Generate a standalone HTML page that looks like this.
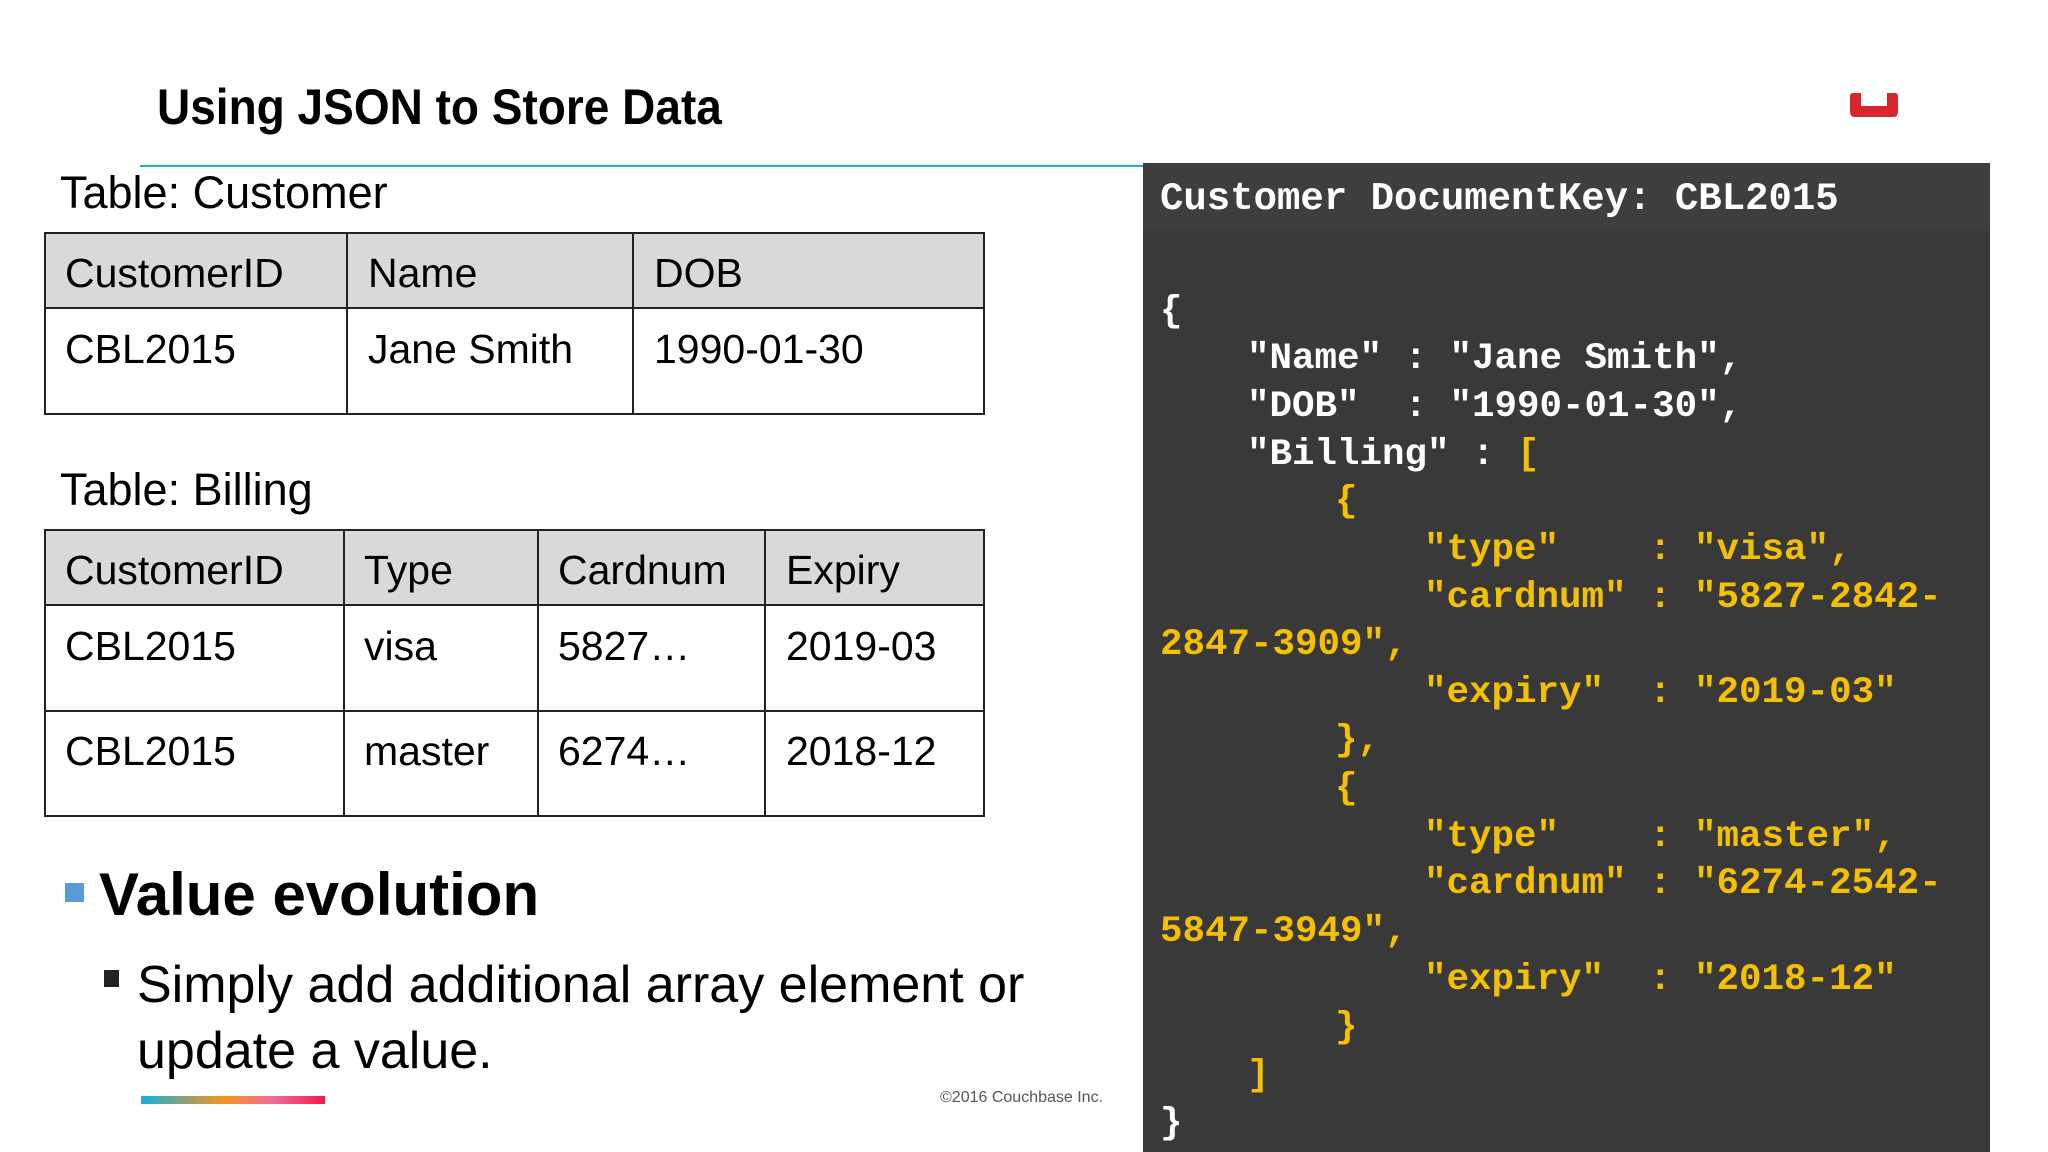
<!DOCTYPE html>
<html><head><meta charset="utf-8"><style>
body{margin:0;width:2048px;height:1152px;background:#fff;position:relative;overflow:hidden;font-family:"Liberation Sans",sans-serif;color:#000}
.a{position:absolute;white-space:pre;line-height:1}
.c{font-size:41px}
.t{font-size:45px}
.m{font-family:"Liberation Mono",monospace;font-weight:bold;font-size:37.5px;color:#fff}
.y{color:#f5c000}
.hl{position:absolute;background:#222}
</style></head><body>
<div class="a" style="left:157px;top:82px;font-size:50px;font-weight:bold;transform:scaleX(0.92);transform-origin:left top">Using JSON to Store Data</div>
<svg style="position:absolute;left:1850px;top:93px" width="48" height="25" viewBox="0 0 48 25"><path d="M0 3 Q0 0 3 0 H11 V13 H37 V0 H45 Q48 0 48 3 V19 Q48 24 43 24 H5 Q0 24 0 19 Z" fill="#d8262f"/></svg>
<div style="position:absolute;left:140px;top:165px;width:1005px;height:2px;background:#29a9d6"></div>

<div class="a t" style="left:60px;top:170px">Table: Customer</div>
<div style="position:absolute;left:44px;top:232px;width:939px;height:76px;background:#d9d9d9"></div>
<div class="hl" style="left:44px;top:232px;width:941px;height:2px"></div>
<div class="hl" style="left:44px;top:307px;width:941px;height:2px"></div>
<div class="hl" style="left:44px;top:413px;width:941px;height:2px"></div>
<div class="hl" style="left:44px;top:232px;width:2px;height:183px"></div>
<div class="hl" style="left:346px;top:232px;width:2px;height:183px"></div>
<div class="hl" style="left:632px;top:232px;width:2px;height:183px"></div>
<div class="hl" style="left:983px;top:232px;width:2px;height:183px"></div>
<div class="a c" style="left:65px;top:253px">CustomerID</div>
<div class="a c" style="left:368px;top:253px">Name</div>
<div class="a c" style="left:654px;top:253px">DOB</div>
<div class="a c" style="left:65px;top:329px">CBL2015</div>
<div class="a c" style="left:368px;top:329px">Jane Smith</div>
<div class="a c" style="left:654px;top:329px">1990-01-30</div>

<div class="a t" style="left:60px;top:467px">Table: Billing</div>
<div style="position:absolute;left:44px;top:529px;width:939px;height:76px;background:#d9d9d9"></div>
<div class="hl" style="left:44px;top:529px;width:941px;height:2px"></div>
<div class="hl" style="left:44px;top:604px;width:941px;height:2px"></div>
<div class="hl" style="left:44px;top:710px;width:941px;height:2px"></div>
<div class="hl" style="left:44px;top:815px;width:941px;height:2px"></div>
<div class="hl" style="left:44px;top:529px;width:2px;height:288px"></div>
<div class="hl" style="left:343px;top:529px;width:2px;height:288px"></div>
<div class="hl" style="left:537px;top:529px;width:2px;height:288px"></div>
<div class="hl" style="left:764px;top:529px;width:2px;height:288px"></div>
<div class="hl" style="left:983px;top:529px;width:2px;height:288px"></div>
<div class="a c" style="left:65px;top:550px">CustomerID</div>
<div class="a c" style="left:364px;top:550px">Type</div>
<div class="a c" style="left:558px;top:550px">Cardnum</div>
<div class="a c" style="left:786px;top:550px">Expiry</div>
<div class="a c" style="left:65px;top:626px">CBL2015</div>
<div class="a c" style="left:364px;top:626px">visa</div>
<div class="a c" style="left:558px;top:626px">5827…</div>
<div class="a c" style="left:786px;top:626px">2019-03</div>
<div class="a c" style="left:65px;top:731px">CBL2015</div>
<div class="a c" style="left:364px;top:731px">master</div>
<div class="a c" style="left:558px;top:731px">6274…</div>
<div class="a c" style="left:786px;top:731px">2018-12</div>

<div style="position:absolute;left:65px;top:883px;width:19px;height:19px;background:#5b9bd5"></div>
<div class="a" style="left:99px;top:865px;font-size:60px;font-weight:bold">Value evolution</div>
<div style="position:absolute;left:104px;top:970px;width:15px;height:17px;background:#222"></div>
<div class="a" style="left:137px;top:959px;font-size:52px">Simply add additional array element or</div>
<div class="a" style="left:137px;top:1025px;font-size:52px">update a value.</div>
<div style="position:absolute;left:141px;top:1096px;width:184px;height:8px;background:linear-gradient(90deg,#18b0d8,#f7941d 45%,#f26b9c 72%,#ee1c45)"></div>
<div class="a" style="left:940px;top:1090px;font-size:16px;color:#555">©2016 Couchbase Inc.</div>

<div style="position:absolute;left:1143px;top:163px;width:847px;height:989px;background:#393939"></div>
<div style="position:absolute;left:1143px;top:163px;width:847px;height:68px;background:#3e3e3e"></div>
<div class="a m" style="left:1160px;top:180px;font-size:39px">Customer DocumentKey: CBL2015</div>
<div class="a m" style="left:1160px;top:294px">{</div>
<div class="a m" style="left:1247px;top:341px">"Name" : "Jane Smith",</div>
<div class="a m" style="left:1247px;top:389px">"DOB"  : "1990-01-30",</div>
<div class="a m" style="left:1247px;top:437px">"Billing" : <span class="y">[</span></div>
<div class="a m y" style="left:1335px;top:484px">{</div>
<div class="a m y" style="left:1424px;top:532px">"type"    : "visa",</div>
<div class="a m y" style="left:1424px;top:580px">"cardnum" : "5827-2842-</div>
<div class="a m y" style="left:1160px;top:627px">2847-3909",</div>
<div class="a m y" style="left:1424px;top:675px">"expiry"  : "2019-03"</div>
<div class="a m y" style="left:1335px;top:723px">},</div>
<div class="a m y" style="left:1335px;top:771px">{</div>
<div class="a m y" style="left:1424px;top:819px">"type"    : "master",</div>
<div class="a m y" style="left:1424px;top:866px">"cardnum" : "6274-2542-</div>
<div class="a m y" style="left:1160px;top:914px">5847-3949",</div>
<div class="a m y" style="left:1424px;top:962px">"expiry"  : "2018-12"</div>
<div class="a m y" style="left:1335px;top:1010px">}</div>
<div class="a m y" style="left:1247px;top:1058px">]</div>
<div class="a m" style="left:1160px;top:1106px">}</div>
</body></html>
